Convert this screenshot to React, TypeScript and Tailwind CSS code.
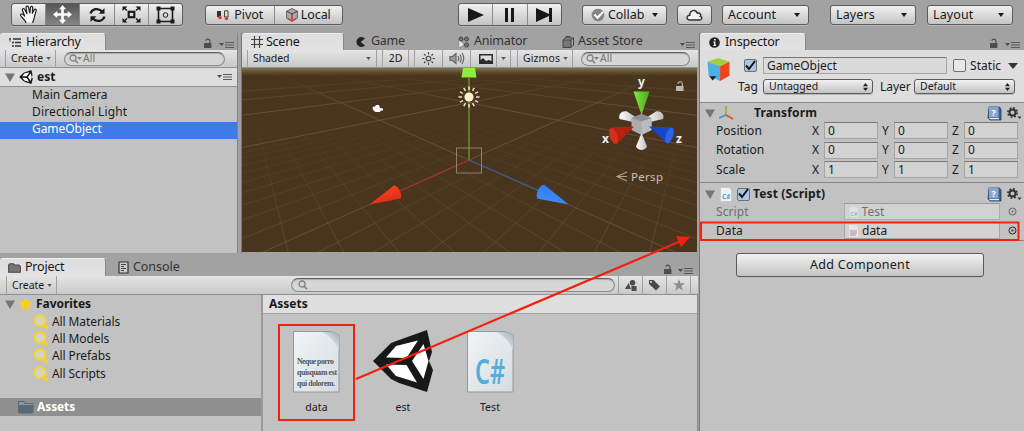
import React from "react";

type Kids = { children?: React.ReactNode; className?: string };

const Caret = ({ className = "" }: { className?: string }) => (
  <svg width="6" height="4" viewBox="0 0 6 4" className={`shrink-0 ${className}`}>
    <path d="M0 0H6L3 4Z" fill="currentColor" />
  </svg>
);

const Fold = () => (
  <svg width="10" height="9" viewBox="0 0 10 9" className="shrink-0">
    <path d="M0 .5H10L5 9Z" fill="#757575" />
  </svg>
);

const Menu = () => (
  <svg width="15" height="8" viewBox="0 0 15 8" className="shrink-0">
    <path d="M0 2H5L2.5 5Z" fill="#4c4c4c" />
    <path d="M6 1.500H15M6 4H15M6 6.500H15" stroke="#5a5a5a" strokeWidth="1.2" />
  </svg>
);

const Lock = ({ color = "#4d4d4d" }: { color?: string }) => (
  <svg width="9" height="10" viewBox="0 0 9 10" className="shrink-0">
    <rect x="1" y="5" width="7.4" height="5" rx=".5" fill={color} />
    <path d="M2.8 2.6C3.200.5 7 .5 7 3.2V5" fill="none" stroke={color} strokeWidth="1.2" />
  </svg>
);

const UpDown = () => (
  <svg width="5" height="8" viewBox="0 0 5 8" className="shrink-0">
    <path d="M0 3.2 2.5 0 5 3.2ZM0 4.8 2.5 8 5 4.8Z" fill="#222" />
  </svg>
);

const Search = ({ caret, className = "", text }: { caret?: boolean; className?: string; text?: string }) => (
  <div
    className={`flex h-[14px] items-center rounded-full border border-[#8a8a8a] border-t-[#5f5f5f] bg-[#d6d6d6] pl-[4px] text-[10.5px] text-[#757575] shadow-[inset_0_1px_1px_#aaa] ${className}`}
  >
    <svg width="14" height="10" viewBox="0 0 14 10" className="shrink-0">
      <circle cx="4" cy="4" r="3" fill="none" stroke="#808080" strokeWidth="1.3" />
      <path d="M6.2 6.2 9 9.2" stroke="#808080" strokeWidth="1.6" />
      {caret && <path d="M8 3H13L10.5 6Z" fill="#808080" />}
    </svg>
    <span className="-mt-px">{text}</span>
  </div>
);

const Group = ({ children, className = "" }: Kids) => (
  <div
    className={`flex shrink-0 overflow-hidden rounded-[3px] border border-[#5b5b5b] bg-linear-to-b from-[#f1f1f1] to-[#c4c4c4] shadow-[0_1px_0_#b9b9b9] ${className}`}
  >
    {children}
  </div>
);

const Tool = ({ children, on, last }: { children: React.ReactNode; on?: boolean; last?: boolean }) => (
  <div
    className={`flex flex-1 items-center justify-center ${last ? "" : "border-r border-[#8a8a8a]"} ${
      on ? "bg-linear-to-b from-[#565656] to-[#868686]" : ""
    }`}
  >
    {children}
  </div>
);

const Drop = ({ label, className = "" }: { label: string; className?: string }) => (
  <Group className={`h-[20px] items-center justify-between pr-[8px] pl-[5px] text-[12.5px] tracking-[.1px] ${className}`}>
    <span>{label}</span>
    <Caret />
  </Group>
);

const Tab = ({ children, on, className = "" }: Kids & { on?: boolean }) => (
  <div
    className={`flex h-full shrink-0 items-center text-[12.5px] ${
      on ? "rounded-t-[3px] border-t border-r border-t-[#eee] border-r-[#888] bg-linear-to-b from-[#dedede] to-[#e2e2e2] text-[#151515]" : "text-[#333]"
    } ${className}`}
  >
    {children}
  </div>
);

const Bar = ({ children, className = "" }: Kids) => (
  <div className={`flex h-[18px] shrink-0 items-center border-b border-[#909090] bg-linear-to-b from-[#e4e4e4] to-[#c9c9c9] text-[10.5px] ${className}`}>
    {children}
  </div>
);

const Cell = ({ children, className = "" }: Kids) => (
  <div className={`flex h-full shrink-0 items-center border-r border-[#a0a0a0] ${className}`}>{children}</div>
);

const Cube = ({ className = "" }: { className?: string }) => (
  <svg width="23" height="23" viewBox="0 0 21 22" className={className}>
    <path d="M0 3.5 10 0 21 3.5 12 8Z" fill="#a5cf3a" />
    <path d="M0 3.5 12 8V22L1 17Z" fill="#4cb0e4" />
    <path d="M12 8 21 3.5V17L12 22Z" fill="#e8461f" />
    <path d="M1.500 17.500H8.500L5 21.500Z" fill="#222" />
  </svg>
);

const Check = ({ on, className = "" }: { on?: boolean; className?: string }) => (
  <div className={`flex h-[13px] w-[13px] shrink-0 items-center justify-center rounded-[2px] border border-[#6f6f6f] ${on ? "bg-[#a9c6ea]" : "bg-[#e8e8e8]"} ${className}`}>
    {on && (
      <svg width="13" height="12" viewBox="0 0 13 12" className="-mt-[2px] shrink-0">
        <path d="M2 6.500 5 10 11 2" fill="none" stroke="#111" strokeWidth="2" />
      </svg>
    )}
  </div>
);

const UnityMark = ({ size }: { size: number }) => (
  <svg width={size} height={size} viewBox="0 0 60 62" className="shrink-0">
    <path d="M0 31 18 13 26 10 54 0 59 22 56 31 60 40 54 62 26 53 18 49Z" fill="#181818" />
    <path d="M13 27.500 23 16 45 10.500 33.500 28Z" fill="#fff" />
    <path d="M13 34.500 33.500 35 44 52.500 23 46Z" fill="#fff" />
    <path d="M39 31 50.500 14 55.500 31 50.500 49Z" fill="#fff" />
  </svg>
);

const Help = () => (
  <svg width="15" height="15" viewBox="0 0 15 15" className="shrink-0">
    <path d="M2 1H12.500L14 3V14H3L1 12Z" fill="#3a5f8f" stroke="#29405f" strokeWidth=".8" />
    <path d="M2 1H11.500V11.500H2Z" fill="#86a6cf" />
    <path d="M2 12H12V13.200H3Z" fill="#e9eef5" />
    <text x="6.700" y="9.800" fontSize="9" fontWeight="700" fill="#fff" textAnchor="middle" fontFamily="Noto Sans">?</text>
  </svg>
);

const Gear = () => (
  <svg width="15" height="13" viewBox="0 0 15 13" className="shrink-0">
    <circle cx="5.500" cy="5.500" r="3" fill="none" stroke="#333" strokeWidth="2" />
    <circle cx="5.500" cy="5.500" r="4.600" fill="none" stroke="#333" strokeWidth="1.700" strokeDasharray="1.800 1.813" />
    <path d="M10.500 9.500H14.500L12.500 12Z" fill="#333" />
  </svg>
);

const CsPage = ({ size = 15, faded }: { size?: number; faded?: boolean }) => (
  <svg width={size * 0.8} height={size} viewBox="0 0 12 15" className={`shrink-0 ${faded ? "opacity-50" : ""}`}>
    <path d="M.5.5H9L11.500 3V14.500H.5Z" fill="#eef2f5" stroke="#bbb" strokeWidth=".5" />
    <text x="6.200" y="12" fontSize="6.500" fontWeight="700" fill="#3ea2d6" textAnchor="middle" fontFamily="Noto Sans">C#</text>
  </svg>
);

const Dot = ({ color }: { color: string }) => (
  <svg width="9" height="9" viewBox="0 0 9 9" className="shrink-0">
    <circle cx="4.500" cy="4.500" r="3.500" fill="none" stroke={color} />
    <circle cx="4.500" cy="4.500" r="1" fill={color} />
  </svg>
);

function Toolbar() {
  return (
    <div className="flex h-[33px] shrink-0 items-start pt-[3px] pl-[11px]">
      <Group className="h-[23px] w-[172px]">
        <Tool>
          <svg width="20" height="19" viewBox="0 0 20 19" fill="#f7f7f7" stroke="#222" strokeWidth="1.200" strokeLinejoin="round" strokeLinecap="round">
            <path d="M7 17.500C5.500 14.500 3.500 13 1.500 10.500 1.200 9 3 8.500 4.200 9.600L5.600 11 3.300 5C3.100 3.300 4.700 3 5.500 4.300L8 8.600 7 2.500C7 .8 9 .7 9.500 2.200L10.800 8 11.500 2.300C11.900.8 13.700 1 13.700 2.600L13.300 8.300 15.300 4.700C16.200 3.600 17.600 4.300 17.200 5.600L15.500 11.500C15 14 14.500 15.500 13.700 17.500" />
          </svg>
        </Tool>
        <Tool on>
          <svg width="19" height="19" viewBox="0 0 19 19" fill="#fff">
            <path d="M9.500 0 13 4.200H10.800V8.200H14.800V6L19 9.500 14.800 13V10.800H10.800V14.800H13L9.500 19 6 14.800H8.200V10.800H4.200V13L0 9.500 4.200 6V8.200H8.200V4.200H6Z" />
          </svg>
        </Tool>
        <Tool>
          <svg width="17" height="16" viewBox="0 0 17 16" fill="none" stroke="#1b1b1b" strokeWidth="2.300">
            <path d="M1.500 6.500C3 1.800 9 .5 13 4.300M15.500 9.500C14 14.200 8 15.500 4 11.700" />
            <path d="M15.500 1V6.800H9.700ZM1.500 15V9.200H7.300Z" fill="#1b1b1b" stroke="none" />
          </svg>
        </Tool>
        <Tool>
          <svg width="19" height="17" viewBox="0 0 19 17" fill="none" stroke="#1b1b1b">
            <rect x="6.700" y="5.800" width="5.600" height="5.400" strokeWidth="2.200" />
            <path d="M5 4.500 1.500 1.500M14 4.500 17.500 1.500M5 12.500 1.500 15.500M14 12.500 17.500 15.500" strokeWidth="1.600" />
            <path d="M.5.500H5.500L.5 5ZM18.500.500H13.500L18.500 5ZM.5 16.500H5.500L.5 12ZM18.500 16.500H13.500L18.500 12Z" fill="#1b1b1b" stroke="none" />
          </svg>
        </Tool>
        <Tool last>
          <svg width="19" height="18" viewBox="0 0 19 18" fill="none" stroke="#1b1b1b">
            <path d="M2.500 2.500H16.500V15.500H2.500Z" strokeWidth="1.600" />
            <path d="M.5.500H4.500V4.500H.5ZM14.500 .5H18.500V4.500H14.500ZM.5 13.500H4.500V17.500H.5ZM14.500 13.500H18.500V17.500H14.500Z" fill="#1b1b1b" stroke="none" />
            <circle cx="9.500" cy="9" r="2.300" />
          </svg>
        </Tool>
      </Group>
      <Group className="mt-[2px] ml-[22px] h-[20px] w-[138px] text-[12.500px] tracking-[-.05px]">
        <Tool>
          <svg width="14" height="11" viewBox="0 0 14 11" className="mr-[4px] shrink-0">
            <path d="M1 1H5V7H1Z" fill="#333" />
            <path d="M8.500.8H12V7H8.500Z" fill="#ddd" stroke="#444" />
            <circle cx="4" cy="7.500" r="1.800" fill="#d9423b" />
            <circle cx="10.500" cy="8.500" r="1.800" fill="#d9423b" />
          </svg>
          Pivot
        </Tool>
        <Tool last>
          <svg width="12" height="14" viewBox="0 0 11 13" className="mr-[3px] shrink-0">
            <path d="M.5 3 5.500.5 10.500 3V9.500L5.500 12.500.5 9.500Z" fill="#aaa" stroke="#555" strokeWidth=".8" />
            <path d="M.5 3 5.500 5.500 10.500 3M5.500 5.500V12" fill="none" stroke="#333" strokeWidth=".8" />
            <path d="M5.500 6V12M5.500 12 1.500 9.500M5.500 12 9.500 9.500" stroke="#d9423b" strokeWidth="1.200" />
          </svg>
          Local
        </Tool>
      </Group>
      <Group className="ml-[115px] h-[23px] w-[104px]">
        <Tool>
          <svg width="16" height="14" viewBox="0 0 16 14"><path d="M0 0 16 7 0 14Z" fill="#181818" /></svg>
        </Tool>
        <Tool>
          <svg width="11" height="14" viewBox="0 0 11 14"><path d="M1 0H4V14H1ZM7 0H10V14H7Z" fill="#181818" /></svg>
        </Tool>
        <Tool last>
          <svg width="17" height="14" viewBox="0 0 17 14"><path d="M0 0 13 6V0H16V14H13V8L0 14Z" fill="#181818" /></svg>
        </Tool>
      </Group>
      <Group className="mt-[2px] ml-[20px] h-[20px] w-[85px] items-center justify-between pr-[8px] pl-[8px] text-[12.500px] tracking-[-.05px]">
        <div className="flex items-center gap-[3px]">
          <svg width="14" height="14" viewBox="0 0 14 14">
            <circle cx="7" cy="7" r="6.300" fill="#858585" />
            <path d="M3.500 6.500 6.500 9.800 12 4" fill="none" stroke="#fff" strokeWidth="2" />
          </svg>
          Collab
        </div>
        <Caret />
      </Group>
      <Group className="mt-[2px] ml-[10px] h-[20px] w-[35px] items-center justify-center">
        <svg width="17" height="12" viewBox="0 0 17 12">
          <path d="M4 11C.3 11 0 6.500 3.800 6.300 3.500 1.500 9.500-.5 11.300 4.200 14 3.500 15.500 6 14.300 7.300 16.800 8 16 11 13.800 11Z" fill="#f3f3f3" stroke="#333" strokeWidth="1.400" />
        </svg>
      </Group>
      <Drop label="Account" className="mt-[2px] ml-[10px] w-[87px]" />
      <Drop label="Layers" className="mt-[2px] ml-[21px] w-[86px]" />
      <Drop label="Layout" className="mt-[2px] ml-[11px] w-[86px]" />
    </div>
  );
}

function Hierarchy() {
  return (
    <div className="flex w-[238px] flex-col border-r border-[#858585] bg-[#c2c2c2]">
      <div className="flex h-[17px] shrink-0 items-end bg-[#a2a2a2]">
        <Tab on className="w-[106px] pl-[9px]">
          <svg width="12" height="9" viewBox="0 0 12 9" className="mr-[5px]">
            <path d="M0 1H2M4 1H12M3 4.500H5M6 4.500H12M3 8H5M6 8H12" stroke="#333" strokeWidth="1.300" />
            <path d="M1 1V4" stroke="#666" />
          </svg>
          <span className="tracking-[-.2px]">Hierarchy</span>
        </Tab>
        <div className="ml-auto flex items-end gap-[7px] pr-[3px] pb-[1px]">
          <div className="flex pb-px"><Lock /></div>
          <Menu />
        </div>
      </div>
      <Bar>
        <Cell className="w-[6px]" />
        <Cell className="w-[50px] justify-between pr-[4px] pl-[5px]">
          Create <Caret className="h-[3px] w-[5px] text-[#555]" />
        </Cell>
        <Search caret text="All" className="ml-[8px] w-[161px]" />
      </Bar>
      <div className="flex h-[19px] shrink-0 items-center border-b border-[#8f8f8f] bg-[#dedede] pr-[5px] pl-[5px]">
        <Fold />
        <div className="mr-[4px] ml-[4px] flex"><UnityMark size={14} /></div>
        <span className="text-[12px] font-bold">est</span>
        <div className="ml-auto flex"><Menu /></div>
      </div>
      {["Main Camera", "Directional Light", "GameObject"].map((t, i) => (
        <div
          key={t}
          className={`flex h-[17.300px] shrink-0 items-center pb-[1.500px] pl-[32px] text-[12px] ${
            i === 2 ? "bg-[#3d7be6] tracking-[-.05px] text-white" : i === 1 ? "tracking-[.15px]" : "tracking-[.05px]"
          }`}
        >
          {t}
        </div>
      ))}
    </div>
  );
}

const STEPS = Array.from({ length: 81 }, (_, i) => i - 40);

function SceneView() {
  const lines = (minor: boolean) =>
    STEPS.filter((k) => (k % 10 !== 0) === minor).map((k) => (
      <g key={k}>
        <path d={`M240 57.600 L${677 + k * 55.5} 253`} />
        <path d={`M698 57.600 L${261 + k * 55.5} 253`} />
      </g>
    ));
  return (
    <svg viewBox="242 68 455 184" className="block h-[184px] w-[455px]">
      <defs>
        <linearGradient id="sky" x1="0" y1="0" x2="0" y2="1">
          <stop offset="0" stopColor="#7d7653" />
          <stop offset=".5" stopColor="#5d4e2d" />
          <stop offset="1" stopColor="#49351e" />
        </linearGradient>
        <linearGradient id="fadeMinor" gradientUnits="userSpaceOnUse" x1="0" y1="105" x2="0" y2="250">
          <stop offset="0" stopColor="#000" />
          <stop offset=".4" stopColor="#666" />
          <stop offset="1" stopColor="#fff" />
        </linearGradient>
        <linearGradient id="fadeMajor" gradientUnits="userSpaceOnUse" x1="0" y1="72" x2="0" y2="110">
          <stop offset="0" stopColor="#000" />
          <stop offset="1" stopColor="#fff" />
        </linearGradient>
        <mask id="mMinor" maskUnits="userSpaceOnUse" x="242" y="68" width="455" height="184">
          <rect x="242" y="68" width="455" height="184" fill="url(#fadeMinor)" />
        </mask>
        <mask id="mMajor" maskUnits="userSpaceOnUse" x="242" y="68" width="455" height="184">
          <rect x="242" y="68" width="455" height="184" fill="url(#fadeMajor)" />
        </mask>
        <linearGradient id="red" x1="0" y1="0" x2=".4" y2="1"><stop offset="0" stopColor="#ff4a26" /><stop offset="1" stopColor="#dc2c14" /></linearGradient>
        <linearGradient id="blue" x1=".4" y1="0" x2="0" y2="1"><stop offset="0" stopColor="#2f7df0" /><stop offset="1" stopColor="#3f90ff" /></linearGradient>
        <linearGradient id="green"><stop offset="0" stopColor="#87e53f" /><stop offset="1" stopColor="#4aa81e" /></linearGradient>
        <linearGradient id="white"><stop offset="0" stopColor="#fff" /><stop offset="1" stopColor="#bbb" /></linearGradient>
      </defs>
      <rect x="242" y="68" width="455" height="184" fill="#49351e" />
      <rect x="242" y="68" width="455" height="8" fill="url(#sky)" />
      <g stroke="#7a664b" strokeWidth=".8" opacity=".5" mask="url(#mMinor)">{lines(true)}</g>
      <g stroke="#857257" strokeWidth=".9" opacity=".5" mask="url(#mMajor)">{lines(false)}</g>
      <path d="M469 160V78" stroke="#72a32a" strokeWidth="1.200" />
      <path d="M469 160 398 192" stroke="#a53222" strokeWidth="1.100" />
      <path d="M469 160 540 191" stroke="#3c5c9c" strokeWidth="1.100" />
      <rect x="456.500" y="148" width="25" height="25" fill="none" stroke="#8d8270" />
      <path d="M463 68H475L476.500 77.500H461.500Z" fill="#8ff03c" />
      <path d="M369.500 204.500 394 185.500C399 186 402 194 401 198.500Z" fill="url(#red)" />
      <path d="M568.500 204.500 544 184.500C538 187 536 193 537 198.500Z" fill="url(#blue)" />
      <g stroke="#f4eed2" strokeWidth="1.400">
        {[0, 30, 60, 90, 120, 150, 180, 210, 240, 270, 300, 330].map((a) => (
          <path key={a} d="M469 90V86.500" transform={`rotate(${a} 469 97)`} />
        ))}
      </g>
      <circle cx="469" cy="97" r="4.600" fill="#f7f0cf" />
      <path d="M372.500 107 375 106.500 376 105H379L380 108 383 108.500V110.500L380.500 110.500 380 112H375.500L373 110Z" fill="#fff" />
      <text x="641.500" y="86" fontSize="12" fontWeight="700" fill="#eee" textAnchor="middle" fontFamily="Noto Sans">y</text>
      <text x="605.500" y="143" fontSize="12" fontWeight="700" fill="#eee" textAnchor="middle" fontFamily="Noto Sans">x</text>
      <text x="679" y="143" fontSize="12" fontWeight="700" fill="#eee" textAnchor="middle" fontFamily="Noto Sans">z</text>
      <path d="M633 122 619.500 119C618 114 622 110.500 627 111.500L637 118Z" fill="url(#white)" />
      <path d="M650 122 663 119C665 114 660 110.500 656 111.500L646 118Z" fill="url(#white)" />
      <path d="M631.500 118 641.500 114 651.500 118V130L641.500 135 631.500 130Z" fill="#a9abad" />
      <path d="M631.500 118 641.500 114 651.500 118 641.500 121.500Z" fill="#8c8f94" />
      <path d="M641.500 121.500 651.500 118V130L641.500 135Z" fill="#b9bbbe" />
      <path d="M633.500 91.500H649.500L641.500 115Z" fill="url(#green)" />
      <path d="M641.500 133 647 146.500C645 151 638 151 636 146.500Z" fill="url(#white)" />
      <path d="M634 126.500 610 127.500C608 133 611 142 617 144Z" fill="#b9200f" />
      <ellipse cx="613.500" cy="136" rx="3.700" ry="8.300" transform="rotate(-18 613.500 136)" fill="#d0301c" />
      <path d="M649 126.500 673 127.500C675 133 672 142 667 143.500Z" fill="#1746c8" />
      <ellipse cx="669.500" cy="135.500" rx="3.500" ry="8.300" transform="rotate(18 669.500 135.500)" fill="#2f62ea" />
      <path d="M627 172 617 176.500 627 181M617 176.500H627" fill="none" stroke="#aaa193" strokeWidth="1.200" />
      <text x="631" y="181" fontSize="11.500" letterSpacing=".3" fill="#c6c0b4" fontFamily="Noto Sans">Persp</text>
      <g fill="#bdb9b0">
        <rect x="676" y="86" width="7.500" height="5" />
        <path d="M678 84C678 81 682 81 682.300 83.500V86" fill="none" stroke="#bdb9b0" strokeWidth="1.100" />
      </g>
    </svg>
  );
}

function Scene() {
  return (
    <div className="ml-[3px] flex w-[457px] flex-col border-l border-[#777]">
      <div className="flex h-[17px] shrink-0 items-end">
        <Tab on className="w-[102px] pl-[9px]">
          <svg width="12" height="12" viewBox="0 0 12 12" className="mr-[3px]">
            <path d="M3.500 0V12M8.500 0V12M0 3.500H12M0 8.500H12" stroke="#444" strokeWidth="1.200" />
          </svg>
          <span className="tracking-[-.25px]">Scene</span>
        </Tab>
        <Tab className="ml-[12px] w-[101px]">
          <svg width="10" height="10" viewBox="0 0 10 10" className="mr-[5px]">
            <path d="M9 1.500A5 5 0 1 0 9 8.500L5 5.300V4.700Z" fill="#222" />
          </svg>
          <span className="tracking-[-.3px]">Game</span>
        </Tab>
        <Tab className="w-[105px]">
          <svg width="13" height="12" viewBox="0 0 13 12" className="mr-[4px]">
            <g fill="#777" stroke="#444"><circle cx="4" cy="3" r="2" /><circle cx="9.500" cy="3" r="2" /><circle cx="9.500" cy="9" r="2" /></g>
            <path d="M2 4V12L7 8.500Z" fill="#eee" stroke="#666" strokeWidth=".5" />
          </svg>
          <span className="tracking-[-.2px]">Animator</span>
        </Tab>
        <Tab>
          <svg width="12" height="12" viewBox="0 0 12 12" className="mr-[4px]">
            <path d="M1 4H9V11.500H1Z" fill="#777" stroke="#444" />
            <path d="M1 4 3 2H11.500V9L9 11.500M4 2V.5H8V2M9 4 11.500 2" fill="none" stroke="#444" />
          </svg>
          <span className="tracking-[-.1px]">Asset Store</span>
        </Tab>
        <div className="ml-auto flex pr-[3px] pb-[1px]"><Menu /></div>
      </div>
      <Bar>
        <Cell className="w-[6px]" />
        <Cell className="w-[129px] justify-between pr-[5px] pl-[5px] tracking-[-.1px]">
          Shaded <Caret className="h-[3px] w-[5px] text-[#555]" />
        </Cell>
        <Cell className="w-[6px]" />
        <Cell className="w-[26px] justify-center">2D</Cell>
        <Cell className="w-[6px]" />
        <Cell className="w-[28px] justify-center">
          <svg width="13" height="13" viewBox="0 0 13 13" fill="none" stroke="#444" strokeWidth="1.100">
            <circle cx="6.500" cy="6.500" r="2.300" />
            <path d="M6.500 0V2.500M6.500 10.500V13M0 6.500H2.500M10.500 6.500H13M2 2 3.500 3.500M9.500 9.500 11 11M2 11 3.500 9.500M9.500 3.500 11 2" />
          </svg>
        </Cell>
        <Cell className="w-[28px] justify-center">
          <svg width="16" height="13" viewBox="0 0 16 13" fill="none" stroke="#666" strokeWidth="1.200">
            <path d="M1 4.500H3.500L7 1.500V11.500L3.500 8.500H1Z" fill="#999" />
            <path d="M9 4Q10.500 6.500 9 9M11 2.500Q13.500 6.500 11 10.500M13 1Q16.500 6.500 13 12" />
          </svg>
        </Cell>
        <Cell className="w-[40px] justify-between pr-[4px] pl-[8px]">
          <svg width="14" height="10" viewBox="0 0 14 10">
            <path d="M0 0H14V10H0Z" fill="#2b2b2b" />
            <path d="M1.500 6 4 4 7 7 10 6 12.500 7V1.500H1.500Z" fill="#ddd" />
          </svg>
          <div className="flex h-[18px] items-center border-l border-[#a0a0a0] pl-[4px]">
            <Caret className="h-[3px] w-[5px] text-[#555]" />
          </div>
        </Cell>
        <Cell className="w-[7px]" />
        <Cell className="w-[55px] justify-between pr-[4px] pl-[5px] tracking-[.1px]">
          Gizmos <Caret className="h-[3px] w-[5px] text-[#555]" />
        </Cell>
        <Search caret text="All" className="ml-[8px] w-[109px]" />
      </Bar>
      <SceneView />
    </div>
  );
}

function Project() {
  return (
    <div className="mt-[5px] flex min-h-0 flex-1 flex-col bg-[#c2c2c2]">
      <div className="flex h-[18px] shrink-0 items-end bg-[#a2a2a2]">
        <Tab on className="w-[106px] pl-[8px]">
          <svg width="13" height="10" viewBox="0 0 13 10" className="mr-[4px]">
            <path d="M.7 9.300V2L2 .7H5.500L6.500 2H11L12.300 3.500V9.300Z" fill="#777" stroke="#444" strokeWidth="1.100" />
          </svg>
          <span className="tracking-[-.2px]">Project</span>
        </Tab>
        <Tab className="ml-[12px]">
          <svg width="11" height="13" viewBox="0 0 11 13" className="mr-[4px]">
            <path d="M1 1H10V12H1Z" fill="#ccc" stroke="#333" strokeWidth="1.200" />
            <path d="M3 3.500H8M3 5.500H6M3 7.500H8M3 9.500H6" stroke="#444" />
          </svg>
          <span className="tracking-[-.05px]">Console</span>
        </Tab>
        <div className="ml-auto flex items-end gap-[6px] pr-[5px] pb-[1px]">
          <div className="flex pb-px"><Lock /></div>
          <Menu />
        </div>
      </div>
      <Bar className="h-[19px]">
        <Cell className="w-[7px]" />
        <Cell className="w-[50px] justify-between pr-[4px] pl-[5px]">
          Create <Caret className="h-[3px] w-[5px] text-[#555]" />
        </Cell>
        <Search className="ml-[234px] w-[324px] pl-[6px]" />
        <div className="ml-auto flex h-full">
          <Cell className="w-[25px] justify-center border-l">
            <svg width="12" height="11" viewBox="0 0 12 11" fill="#4a4a4a">
              <circle cx="7.500" cy="2.800" r="2.800" /><path d="M0 9 3.500 3 6 9ZM6.500 6H11.500V11H6.500Z" />
            </svg>
          </Cell>
          <Cell className="w-[24px] justify-center">
            <svg width="13" height="12" viewBox="0 0 13 12">
              <path d="M1 1H5.500L12 7.500 8 11.500 1 5Z" fill="#4a4a4a" /><circle cx="3" cy="3" r="1" fill="#ddd" />
            </svg>
          </Cell>
          <Cell className="w-[24px] justify-center">
            <svg width="12" height="12" viewBox="0 0 12 12"><path d="M6 0 7.500 4.300H12L8.400 7.100 9.700 11.500 6 8.900 2.300 11.500 3.600 7.100 0 4.300H4.500Z" fill="#8d8d8d" /></svg>
          </Cell>
          <div className="w-[7px]" />
        </div>
      </Bar>
      <div className="flex min-h-0 flex-1">
        <div className="flex w-[263px] flex-col border-r-2 border-[#9a9a9a] text-[12px]">
          <div className="flex h-[18px] shrink-0 items-center pl-[5px] font-bold">
            <Fold />
            <svg width="15" height="14" viewBox="0 0 12 12" className="mr-[3px] ml-[3px]">
              <path d="M6 0 7.700 4.100 12 4.400 8.700 7.200 9.700 11.500 6 9.200 2.300 11.500 3.300 7.200 0 4.400 4.300 4.100Z" fill="#fbd015" />
            </svg>
            <span className="tracking-[-.05px]">Favorites</span>
          </div>
          {["All Materials", "All Models", "All Prefabs", "All Scripts"].map((t) => (
            <div key={t} className="flex h-[17.300px] shrink-0 items-center pl-[33px] tracking-[-.1px]">
              <svg width="16" height="16" viewBox="0 0 16 16" className="mr-[3px]">
                <circle cx="7" cy="6.500" r="5.500" fill="#d5d2c2" stroke="#f8d51c" strokeWidth="1.800" />
                <path d="M10.500 10.500 14.500 14.500" stroke="#f8d51c" strokeWidth="2.800" />
              </svg>
              {t}
            </div>
          ))}
          <div className="mt-[15.500px] flex h-[18px] shrink-0 items-center bg-[#8f8f8f] pl-[18px] font-bold text-white">
            <svg width="16" height="14" viewBox="0 0 16 14" className="mr-[3px]">
              <path d="M0 1H6L7 3H15.500V12.500L14 13.500H1.500L0 12Z" fill="#586975" />
              <path d="M1 2H5.500L6.500 4H15V5H1Z" fill="#8b9ba5" />
            </svg>
            <span className="tracking-[-.1px]">Assets</span>
          </div>
        </div>
        <div className="flex flex-1 flex-col border-r border-[#8b8b8b]">
          <div className="flex h-[19px] shrink-0 items-center border-b border-[#a3a3a3] bg-[#dfdfdf] pl-[6px] text-[12px] font-bold">Assets</div>
          <div className="flex pt-[10px] pl-[15px]">
            <div className="flex h-[97px] w-[77px] flex-col items-center border-2 border-[#f0220f] pt-[4px]">
              <PageIcon>
                <g fontFamily="Liberation Serif" fontSize="7.800" fontWeight="700" fill="#555">
                  <text x="5" y="34" textLength="37">Neque porro</text>
                  <text x="5" y="45" textLength="40">quisquam est</text>
                  <text x="5" y="55.500" textLength="38">qui dolorem.</text>
                </g>
              </PageIcon>
              <Caption>data</Caption>
            </div>
            <div className="ml-[8px] flex w-[80px] flex-col items-center pt-[6px]">
              <div className="flex h-[64px]"><UnityMark size={62} /></div>
              <Caption>est</Caption>
            </div>
            <div className="ml-[8px] flex w-[78px] flex-col items-center pt-[6px]">
              <PageIcon>
                <text x="9" y="54" fontFamily="Noto Sans" fontSize="34" fontWeight="600" fill="#54aedc" textLength="30" lengthAdjust="spacingAndGlyphs">C#</text>
              </PageIcon>
              <Caption>Test</Caption>
            </div>
          </div>
        </div>
      </div>
    </div>
  );
}

const Caption = ({ children }: Kids) => <div className="mt-[6px] text-[10.500px] leading-[14px] tracking-[.1px]">{children}</div>;

const PageIcon = ({ children }: Kids) => (
  <svg width="49" height="64" viewBox="0 0 49 64" className="shrink-0">
    <defs>
      <linearGradient id="page" x1="0" y1="0" x2="1" y2="1"><stop offset="0" stopColor="#f1f4f6" /><stop offset="1" stopColor="#d5dce1" /></linearGradient>
      <linearGradient id="curl" x1="0" y1="1" x2="1" y2="0"><stop offset=".3" stopColor="#e4eaee" /><stop offset="1" stopColor="#9fb1be" /></linearGradient>
    </defs>
    <path d="M1.500 1.500H39L47 5V62H1.500Z" fill="url(#page)" stroke="#93999d" />
    <path d="M30 2H39L47 5V20Q42 8 30 2Z" fill="url(#curl)" />
    {children}
  </svg>
);

const Input = ({ children, className = "" }: Kids) => (
  <div className={`flex h-[17px] items-center border border-[#a4a4a4] border-t-[#777] bg-[#d2d2d2] pl-[3px] ${className}`}>{children}</div>
);

const Select = ({ label, className }: { label: string; className: string }) => (
  <Group className={`h-[15px] items-center justify-between pr-[4px] pl-[5px] text-[10.500px] ${className}`}>
    {label}
    <UpDown />
  </Group>
);

function Inspector() {
  return (
    <div className="ml-[1px] flex min-w-0 flex-1 flex-col border-l border-[#777] bg-[#c2c2c2] text-[12px]">
      <div className="flex h-[17px] shrink-0 items-end bg-[#a2a2a2]">
        <Tab on className="w-[106px] pl-[9px]">
          <svg width="11" height="11" viewBox="0 0 11 11" className="mr-[5px]">
            <circle cx="5.500" cy="5.500" r="5.300" fill="#222" />
            <path d="M5 2H6.700V3.500H5ZM4.300 4.500H6.500V8H7.200V9H4.300V8H5V5.500H4.300Z" fill="#eee" />
          </svg>
          <span className="tracking-[-.15px]">Inspector</span>
        </Tab>
        <div className="ml-auto flex items-end gap-[7px] pr-[4px] pb-[1px]">
          <div className="flex pb-px"><Lock /></div>
          <Menu />
        </div>
      </div>
      <div className="flex h-[53px] shrink-0 border-b border-[#858585] bg-[#dedede]">
        <Cube className="mt-[8px] ml-[7px] shrink-0" />
        <div className="ml-[7px] flex flex-1 flex-col pt-[7px]">
          <div className="flex items-center">
            <Check on className="ml-[7px]" />
            <Input className="ml-[6px] w-[184px] bg-[#dadada] pl-[2px] tracking-[-.05px]">GameObject</Input>
            <Check className="ml-[6px]" />
            <span className="ml-[4px] tracking-[.05px]">Static</span>
            <svg width="10" height="6" viewBox="0 0 10 6" className="ml-[7px]"><path d="M0 0H10L5 6Z" fill="#333" /></svg>
          </div>
          <div className="mt-[5px] flex items-center">
            <span className="w-[26px] pl-[1px]">Tag</span>
            <Select label="Untagged" className="w-[110px]" />
            <span className="ml-[7px] w-[34px] tracking-[-.05px]">Layer</span>
            <Select label="Default" className="w-[101px]" />
          </div>
        </div>
      </div>
      <div className="flex h-[80px] shrink-0 flex-col border-b border-[#858585]">
        <div className="flex h-[18px] shrink-0 items-center pt-[2px] pl-[5px]">
          <Fold />
          <svg width="15" height="14" viewBox="0 0 15 14" className="ml-[4px]" strokeWidth="1.800">
            <path d="M7 9V0" stroke="#8cb92e" /><path d="M7 9 0 12" stroke="#3e93c9" /><path d="M7 9 14 13" stroke="#dc4e3c" />
          </svg>
          <span className="ml-[20px] text-[12px] font-bold tracking-[.15px]">Transform</span>
          <div className="ml-auto flex items-center gap-[5px] pr-[2px]"><Help /><Gear /></div>
        </div>
        {[["Position", "0"], ["Rotation", "0"], ["Scale", "1"]].map(([n, v]) => (
          <div key={n} className="flex h-[19.500px] shrink-0 items-center pl-[16px]">
            <span className="w-[96px] tracking-[.05px]">{n}</span>
            {["X", "Y", "Z"].map((a, i) => (
              <React.Fragment key={a}>
                <span className={i ? "w-[12px]" : "w-[12px]"}>{a}</span>
                <Input className={i === 2 ? "w-[54px]" : "mr-[4px] w-[54px]"}>{v}</Input>
              </React.Fragment>
            ))}
          </div>
        ))}
      </div>
      <div className="flex h-[58px] shrink-0 flex-col border-b border-[#858585] pt-[1px]">
        <div className="flex h-[18px] shrink-0 items-center pt-[2px] pl-[5px]">
          <Fold />
          <div className="ml-[5px] flex"><CsPage /></div>
          <Check on className="ml-[5px]" />
          <span className="ml-[3px] font-bold tracking-[.15px]">Test (Script)</span>
          <div className="ml-auto flex items-center gap-[5px] pr-[2px]"><Help /><Gear /></div>
        </div>
        <div className="flex h-[19px] shrink-0 items-center pl-[16px] text-[#6f6f6f]">
          <span className="w-[128px] tracking-[.1px]">Script</span>
          <Input className="w-[156px] border-[#adadad] border-t-[#999] bg-[#c8c8c8] pl-[4px]">
            <CsPage size={12} faded />
            <span className="ml-[3px]">Test</span>
          </Input>
          <div className="ml-[8px] flex"><Dot color="#666" /></div>
        </div>
        <div className="flex h-[19px] shrink-0 items-center pl-[16px]">
          <span className="w-[128px] tracking-[.1px]">Data</span>
          <Input className="w-[156px] pl-[4px]">
            <svg width="9" height="12" viewBox="0 0 9 12"><path d="M0 0H7L9 2V12H0Z" fill="#e6e6e6" /><path d="M1 6H8M1 8H8M1 10H7" stroke="#999" /></svg>
            <span className="ml-[4px]">data</span>
          </Input>
          <div className="ml-[8px] flex"><Dot color="#222" /></div>
        </div>
      </div>
      <Group className="mt-[12px] ml-[36px] h-[24px] w-[248px] items-center justify-center text-[12.500px] tracking-[.3px]">Add Component</Group>
    </div>
  );
}

export default function App() {
  return (
    <div className="relative flex h-[431px] w-[1024px] flex-col overflow-hidden bg-[#a2a2a2] font-['Noto_Sans','Open_Sans',sans-serif] leading-none text-[#1a1a1a]">
      <Toolbar />
      <div className="flex min-h-0 flex-1">
        <div className="flex w-[698px] shrink-0 flex-col">
          <div className="flex h-[220px] shrink-0">
            <Hierarchy />
            <Scene />
          </div>
          <Project />
        </div>
        <Inspector />
      </div>
      <svg width="1024" height="431" viewBox="0 0 1024 431" className="pointer-events-none absolute inset-0">
        <path d="M356 379 681 241" stroke="#f0220f" strokeWidth="2.200" />
        <path d="M690 237 681 247.500 676 236Z" fill="#f0220f" />
        <rect x="701" y="222.500" width="317.500" height="17.500" fill="none" stroke="#f0220f" strokeWidth="2" />
      </svg>
    </div>
  );
}
